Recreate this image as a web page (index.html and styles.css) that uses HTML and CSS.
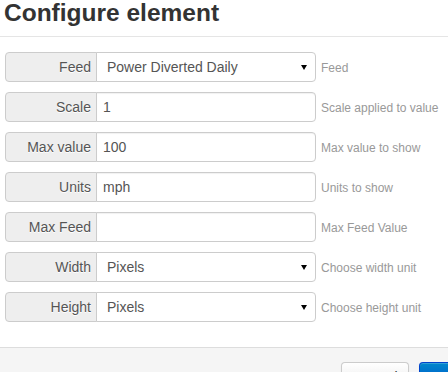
FILE: index.html
```html
<!DOCTYPE html>
<html>
<head>
<meta charset="utf-8">
<link rel="stylesheet" href="styles.css">
</head>
<body>
<div class="modal">
  <div class="modal-header">
    <h3 class="title">Configure element</h3>
  </div>
  <div class="modal-body">
    <div class="row">
      <span class="addon">Feed</span>
      <div class="field select"><span>Power Diverted Daily</span><svg class="caret" width="6" height="5" viewBox="0 0 6 5"><polygon points="0,0 6,0 3,5" fill="#000"/></svg></div>
      <span class="help">Feed</span>
    </div>
    <div class="row">
      <span class="addon">Scale</span>
      <div class="field">1</div>
      <span class="help">Scale applied to value</span>
    </div>
    <div class="row">
      <span class="addon">Max value</span>
      <div class="field">100</div>
      <span class="help">Max value to show</span>
    </div>
    <div class="row">
      <span class="addon">Units</span>
      <div class="field">mph</div>
      <span class="help">Units to show</span>
    </div>
    <div class="row">
      <span class="addon">Max Feed</span>
      <div class="field"></div>
      <span class="help">Max Feed Value</span>
    </div>
    <div class="row">
      <span class="addon">Width</span>
      <div class="field select"><span>Pixels</span><svg class="caret" width="6" height="5" viewBox="0 0 6 5"><polygon points="0,0 6,0 3,5" fill="#000"/></svg></div>
      <span class="help">Choose width unit</span>
    </div>
    <div class="row">
      <span class="addon">Height</span>
      <div class="field select"><span>Pixels</span><svg class="caret" width="6" height="5" viewBox="0 0 6 5"><polygon points="0,0 6,0 3,5" fill="#000"/></svg></div>
      <span class="help">Choose height unit</span>
    </div>
  </div>
  <div class="modal-footer">
    <button class="btn">Cancel</button>
    <button class="btn btn-primary">Save changes</button>
  </div>
</div>
</body>
</html>
```
FILE: styles.css
```css
html, body {
  margin: 0;
  padding: 0;
  background: #fff;
  overflow: hidden;
}
body {
  font-family: "Liberation Sans", Arial, sans-serif;
  font-size: 14px;
  line-height: 20px;
  color: #333;
}
.modal {
  width: 560px;
}
.modal-header {
  padding: 0 5px 10px 4px;
  border-bottom: 1px solid #e5e5e5;
}
.title {
  margin: 0;
  font-size: 24.5px;
  line-height: 26px;
  font-weight: bold;
  color: #333;
}
.modal-body {
  padding: 15px 5px 25px 5px;
  display: flex;
  flex-direction: column;
  gap: 10px;
}
.row {
  display: flex;
  align-items: stretch;
  height: 30px;
}
.addon {
  box-sizing: border-box;
  width: 92px;
  margin-right: -1px;
  padding: 4px 5px;
  text-align: right;
  background: #eee;
  border: 1px solid #ccc;
  border-radius: 4px 0 0 4px;
  color: #555;
  text-shadow: 0 1px 0 #fff;
  line-height: 20px;
}
.field {
  box-sizing: border-box;
  width: 220px;
  padding: 4px 6px;
  border: 1px solid #ccc;
  border-radius: 0 4px 4px 0;
  background: #fff;
  color: #555;
  line-height: 20px;
  box-shadow: inset 0 1px 1px rgba(0,0,0,0.06);
}
.select {
  display: flex;
  align-items: center;
  justify-content: space-between;
  padding: 4px 8px 4px 10px;
  box-shadow: none;
}
.caret {
  display: block;
  margin-top: 1px;
}
.help {
  margin-left: 5px;
  font-size: 12px;
  color: #999;
  align-self: center;
  padding-top: 2px;
}
.modal-footer {
  padding: 14px 15px 15px;
  background: #f5f5f5;
  border-top: 1px solid #ddd;
  display: flex;
  justify-content: flex-end;
  gap: 10px;
}
.btn {
  font-family: "Liberation Sans", Arial, sans-serif;
  font-size: 14px;
  line-height: 20px;
  padding: 4px 12px;
  border-radius: 4px;
  border: 1px solid #ccc;
  border-bottom-color: #b3b3b3;
  background: linear-gradient(#ffffff, #e6e6e6);
  color: #333;
  box-shadow: inset 0 1px 0 rgba(255,255,255,0.2), 0 1px 2px rgba(0,0,0,0.05);
}
.btn:first-child {
  width: 68px;
}
.btn-primary {
  width: 126px;
  color: #fff;
  background: linear-gradient(#0088cc, #0044cc);
  border-color: #0044cc #0044cc #002a80;
}
```
